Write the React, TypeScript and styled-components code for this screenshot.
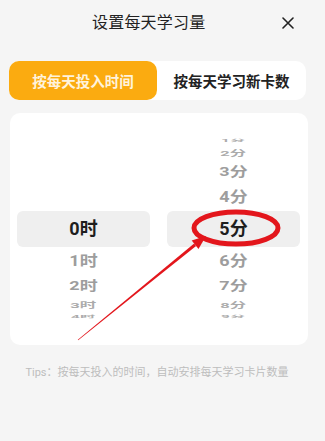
import React from "react";
import styled, { createGlobalStyle } from "styled-components";

const Global = createGlobalStyle`
  html, body { margin: 0; padding: 0; background: #f5f5f5; }
  body { font-family: "Roboto", "Noto Sans CJK SC", "Noto Sans", sans-serif; }
`;

const Page = styled.div`
  position: relative;
  width: 325px;
  height: 441px;
  background: #f5f5f5;
  overflow: hidden;
`;

const Header = styled.div`
  height: 46px;
  display: flex;
  align-items: center;
  justify-content: space-between;
  padding: 0 31px 0 92px;
`;

const Title = styled.div`
  font-size: 16px;
  line-height: 20px;
  color: #222;
  letter-spacing: 0.2px;
`;

const Close = styled.button`
  border: 0;
  background: none;
  padding: 0;
  width: 12px;
  height: 12px;
  display: flex;
`;

const Segmented = styled.div`
  margin: 15px 0 0 9px;
  width: 297px;
  height: 39px;
  background: #fff;
  border-radius: 10px;
  display: grid;
  grid-template-columns: 148px 1fr;
`;

const Tab = styled.div<{ $active?: boolean }>`
  display: flex;
  align-items: center;
  justify-content: center;
  border-radius: 10px;
  font-size: 14.5px;
  font-weight: 700;
  background: ${(p) => (p.$active ? "#fbab10" : "transparent")};
  color: ${(p) => (p.$active ? "#fff3dc" : "#222")};
`;

const Card = styled.div`
  margin: 13px 0 0 10px;
  width: 298px;
  height: 232px;
  box-sizing: border-box;
  padding: 0 8px 0 7px;
  background: #fff;
  border-radius: 10px;
  display: grid;
  grid-template-columns: 133px 133px;
  column-gap: 17px;
  align-items: center;
`;

const Wheel = styled.div`
  display: flex;
  flex-direction: column;
`;

const Item = styled.div<{ $h: number; $selected?: boolean }>`
  height: ${(p) => p.$h}px;
  display: flex;
  align-items: center;
  justify-content: center;
  border-radius: 6px;
  background: ${(p) => (p.$selected ? "#efefef" : "transparent")};
`;

const Label = styled.span<{ $level: number }>`
  display: inline-block;
  font-size: 18px;
  line-height: 22px;
  font-weight: 700;
  white-space: nowrap;
  color: ${(p) =>
    p.$level === 0 ? "#1e1e1e" : p.$level <= 2 ? "#9d9d9d" : "#ababab"};
`;

const Tips = styled.div`
  margin-top: 20px;
  padding-left: 8px;
  width: 298px;
  text-align: center;
  font-size: 11px;
  line-height: 16px;
  color: #bdbdbd;
`;

const Overlay = styled.svg`
  position: absolute;
  left: 0;
  top: 0;
  pointer-events: none;
`;

const HEIGHTS = [36, 28, 22, 16, 8];
const SY = [1, 0.8, 0.72, 0.45, 0.2];
const SX = [1, 1, 1, 0.92, 0.85];

function PickerColumn({ selected, unit, max }: { selected: number; unit: string; max: number }) {
  const offsets = [-4, -3, -2, -1, 0, 1, 2, 3, 4];
  return (
    <Wheel>
      {offsets.map((o) => {
        const level = Math.abs(o);
        const v = selected + o;
        const show = v >= 0 && v <= max;
        return (
          <Item key={o} $h={HEIGHTS[level]} $selected={o === 0}>
            {show && (
              <Label
                $level={level}
                style={{ transform: `scale(${SX[level]}, ${SY[level]})` }}
              >
                {v}
                {unit}
              </Label>
            )}
          </Item>
        );
      })}
    </Wheel>
  );
}

export default function App() {
  return (
    <Page>
      <Global />
      <Header>
        <Title>设置每天学习量</Title>
        <Close aria-label="关闭">
          <svg width="12" height="12" viewBox="0 0 12 12">
            <path d="M1 1L11 11M11 1L1 11" stroke="#222" strokeWidth="1.6" strokeLinecap="round" />
          </svg>
        </Close>
      </Header>
      <Segmented>
        <Tab $active>按每天投入时间</Tab>
        <Tab>按每天学习新卡数</Tab>
      </Segmented>
      <Card>
        <PickerColumn selected={0} unit="时" max={23} />
        <PickerColumn selected={5} unit="分" max={59} />
      </Card>
      <Tips>Tips：按每天投入的时间，自动安排每天学习卡片数量</Tips>
      <Overlay width="325" height="441" viewBox="0 0 325 441">
        <ellipse cx="236" cy="228" rx="42" ry="16" fill="none" stroke="#e3161c" strokeWidth="5" />
        <polygon
          points="78.19,340.23 77.81,339.77 194.16,243.58 196.04,245.92"
          fill="#e3161c"
        />
        <polygon points="206,236 198.5,249 191.7,240.5" fill="#e3161c" />
      </Overlay>
    </Page>
  );
}
